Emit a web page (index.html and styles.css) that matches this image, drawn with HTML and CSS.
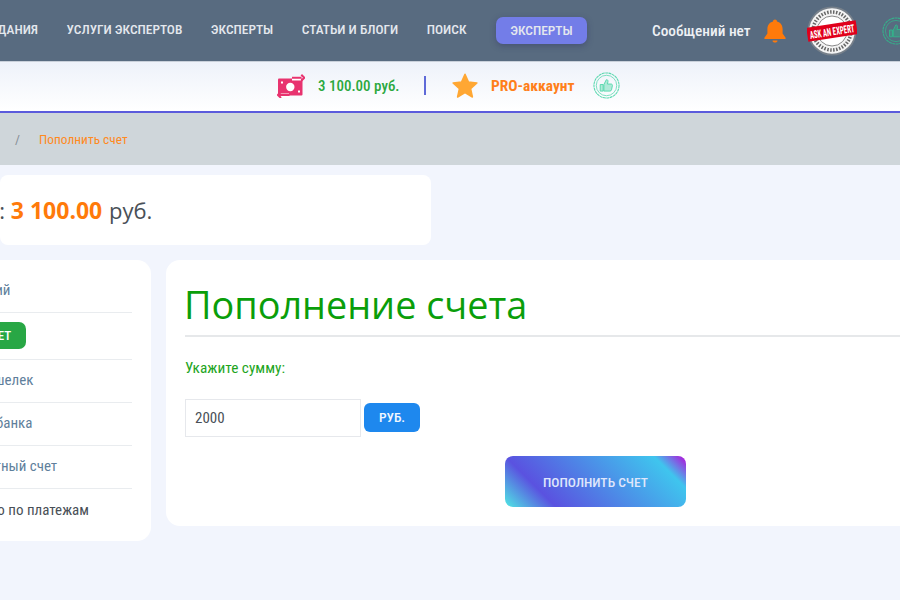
FILE: index.html
```html
<!DOCTYPE html>
<html lang="ru">
<head>
<meta charset="utf-8">
<title>Пополнение счета</title>
<link rel="stylesheet" href="styles.css">
</head>
<body>
<header class="topbar">
  <nav class="nav">
    <a class="nav-link">ЗАДАНИЯ</a>
    <a class="nav-link">УСЛУГИ ЭКСПЕРТОВ</a>
    <a class="nav-link">ЭКСПЕРТЫ</a>
    <a class="nav-link">СТАТЬИ И БЛОГИ</a>
    <a class="nav-link">ПОИСК</a>
    <a class="nav-btn">ЭКСПЕРТЫ</a>
  </nav>
  <div class="user">
    <span class="messages">Сообщений нет</span>
    <svg class="bell" viewBox="0 0 22 24"><path d="M11 .5c1.200 0 2 .8 2 2 3.600.8 5.600 3.800 5.600 7.600v4.400l3 4.200c.3.600 0 1.300-.8 1.300H1.200c-.8 0-1.100-.7-.8-1.300l3-4.200v-4.400c0-3.800 2-6.800 5.600-7.600 0-1.200.8-2 2-2z" fill="#ff7a0a"/><path d="M8.500 21.500h5c0 1.400-1.100 2-2.500 2s-2.500-.6-2.500-2z" fill="#ff7a0a"/></svg>
    <svg class="stamp" viewBox="0 0 50 50">
      <circle cx="25" cy="25" r="24.500" fill="#77808a"/>
      <circle cx="25" cy="25" r="22.800" fill="#f4f4f4"/>
      <circle cx="25" cy="25" r="15" fill="#fff" stroke="#888" stroke-width="1"/>
      <circle cx="25" cy="25" r="19" fill="none" stroke="#666" stroke-width="3.500" stroke-dasharray="1.500 1.500"/>
      <g transform="rotate(-9 25 25)">
        <rect x="0" y="18" width="50" height="14" fill="#e0001b"/>
        <text class="stamp-text" x="25" y="29.500" text-anchor="middle" textLength="45" lengthAdjust="spacingAndGlyphs">ASK AN EXPERT</text>
      </g>
    </svg>
    <svg class="seal seal-dark" viewBox="0 0 28 28"><use href="#seal"/></svg>
  </div>
</header>

<section class="subbar">
  <svg class="money" viewBox="0 0 28 24">
    <rect x="1" y="4.500" width="24.500" height="17" rx="1" fill="#e8336f"/>
    <circle cx="13.300" cy="13" r="4.200" fill="#fff"/>
    <rect x="4" y="7.500" width="2" height="2" fill="#fff"/><rect x="21" y="16.500" width="2" height="2" fill="#fff"/>
    <path d="M15 4.500h9" stroke="#fff" stroke-width="4"/>
    <path d="M15 3.800h9.500M24.300 .8l3 3-3 3" fill="none" stroke="#e8336f" stroke-width="2"/>
    <path d="M12 21.500h-9" stroke="#fff" stroke-width="4"/>
    <path d="M12.500 21H2.500M4 17.800L1 21l3 3" fill="none" stroke="#e8336f" stroke-width="2"/>
  </svg>
  <span class="sum">3 100.00 руб.</span>
  <span class="divider"></span>
  <svg class="star" viewBox="0 0 26 26"><path d="M13 1.200l3.500 7.900 8.400.8-6.300 5.700 1.800 8.400L13 19.700 5.600 24l1.800-8.400L1.100 9.900l8.400-.8z" fill="#ffa733" stroke="#ffa733" stroke-width="1.500" stroke-linejoin="round"/></svg>
  <span class="pro">PRO-аккаунт</span>
  <svg class="seal seal-light" viewBox="0 0 28 28">
    <defs>
      <g id="seal">
        <circle cx="14" cy="14" r="13" fill="none" stroke="currentColor" stroke-width="1.100" stroke-dasharray="3 .5"/>
        <circle cx="14" cy="14" r="10.600" fill="none" stroke="currentColor" stroke-width=".8"/>
        <path d="M7.500 13h3v6.800h-3zM11.300 13l2.500-5c1.300-.2 2 .8 1.700 2l-.5 2.500h3.800c1 0 1.500.8 1.300 1.700l-.9 4.300c-.2.800-.8 1.300-1.600 1.300h-6.300z" fill="currentColor" fill-opacity=".45" stroke="currentColor" stroke-width="1"/>
      </g>
    </defs>
    <use href="#seal"/>
  </svg>
</section>

<div class="crumbs">
  <span class="crumb-sep">/</span>
  <span class="crumb-now">Пополнить счет</span>
</div>

<main class="page">
  <div class="balance">Ваш баланс: <b class="balance-num">3 100.00</b> руб.</div>
  <div class="columns">
    <aside class="side">
      <ul class="side-list">
        <li class="side-item side-item-history">История операций</li>
        <li class="side-item side-item-btn"><span class="side-btn">ПОПОЛНИТЬ СЧЕТ</span></li>
        <li class="side-item side-item-wallet">Электронный кошелек</li>
        <li class="side-item side-item-bank">Реквизиты банка</li>
        <li class="side-item side-item-account">Расчетный счет</li>
        <li class="side-item side-item-dark">Инфо по платежам</li>
      </ul>
    </aside>
    <section class="card">
      <h1 class="title">Пополнение счета</h1>
      <label class="label">Укажите сумму:</label>
      <div class="amount-row">
        <input class="amount" value="2000">
        <button class="currency">РУБ.</button>
      </div>
      <div class="submit-row"><button class="submit">ПОПОЛНИТЬ СЧЕТ</button></div>
    </section>
  </div>
</main>
</body>
</html>
```
FILE: styles.css
```css
* { box-sizing: border-box; }
html, body { margin: 0; height: 600px; overflow: hidden; }
body { background: #f2f5fd; font-family: Roboto, "Liberation Sans", sans-serif; font-stretch: 75%; width: 900px; }

.topbar { height: 62px; background: #586b80; border-bottom: 1px solid #c9d0da; display: flex; align-items: center; overflow: hidden; white-space: nowrap; }
.nav { display: flex; align-items: center; gap: 28.500px; margin-left: -17.500px; flex: none; }
.nav-link { color: #e4e8ee; font-size: 13.400px; font-weight: 500; padding-bottom: 3px; }
.nav-btn { width: 91px; height: 27px; margin-left: 1px; background: #737de8; border-radius: 7px; color: #e4e8ee; font-size: 13.400px; font-weight: 500; display: flex; align-items: center; justify-content: center; box-shadow: 0 2px 6px rgba(40,40,90,.35); }
.user { display: flex; align-items: center; margin-left: 65px; flex: none; }
.messages { color: #eef1f5; font-size: 15.300px; font-weight: 500; margin-right: 13px; }
.bell { width: 22px; height: 24px; margin-right: 21px; }
.stamp { width: 50px; height: 50px; margin-right: 25px; }
.stamp-text { font: 700 11px Roboto, sans-serif; font-stretch: 75%; fill: #fff; }
.seal { width: 28px; height: 28px; flex: none; }
.seal-dark { color: #35b08a; }
.seal-light { color: #58d8ae; width: 27px; height: 27px; }

.subbar { height: 51px; background: linear-gradient(#eef2fa, #fff); border-bottom: 2px solid #5b5bdc; display: flex; align-items: center; padding-left: 277px; padding-bottom: 2px; }
.money { width: 28px; height: 24px; margin-right: 13px; }
.sum { color: #2aa83e; font-size: 15px; font-weight: 500; width: 81px; white-space: nowrap; }
.divider { width: 2px; height: 19px; background: #5f6ad8; margin-left: 25px; margin-right: 26px; }
.star { width: 26px; height: 26px; margin-right: 13px; }
.pro { color: #ff7f1a; font-size: 15.400px; font-weight: 700; margin-right: 18px; }

.crumbs { height: 52px; background: #cfd6da; display: flex; align-items: center; padding-left: 15px; font-size: 13.400px; }
.crumb-sep { color: #868e96; width: 24px; }
.crumb-now { color: #ff8a1f; }

.page { padding-top: 10px; }
.balance { width: 431px; height: 70px; background: #fff; border-radius: 8px; line-height: 70px; text-indent: -127px; font-family: "Open Sans", sans-serif; font-stretch: 100%; font-size: 22px; color: #495057; white-space: nowrap; overflow: hidden; }
.balance-num { color: #ff7a0a; font-weight: 700; font-size: 23px; margin-right: 1px; }

.columns { display: flex; align-items: flex-start; gap: 15px; margin-top: 15px; }
.side { width: 151px; height: 281px; background: #fff; border-radius: 0 14px 14px 0; padding: 9px 19px 0 0; overflow: hidden; flex: none; }
.side-list { list-style: none; margin: 0 0 0 -120px; padding: 0; }
.side-item { height: 43px; padding-bottom: 3px; display: flex; align-items: center; color: #5f7f9c; font-size: 15px; border-bottom: 1px solid #e9ecef; white-space: nowrap; }
.side-item-history { padding-left: 15px; height: 44px; padding-bottom: 1px; }
.side-item-btn { height: 47px; padding-left: 20px; padding-bottom: 2px; }
.side-item-wallet { padding-left: 11px; }
.side-item-bank { padding-left: 44px; }
.side-item-account { padding-left: 78px; }
.side-btn { background: #28a745; color: #fff; font-size: 13px; font-weight: 500; height: 27px; border-radius: 7px; padding: 0 15px 0 10px; display: flex; align-items: center; }
.side-item-dark { color: #495057; border-bottom: 0; padding-left: 91px; padding-bottom: 2px; }

.card { flex: 1; height: 266px; margin-right: -40px; background: #fff; border-radius: 14px; padding: 19px 19px; }
.title { margin: 0; font-family: "Open Sans", sans-serif; font-stretch: 100%; font-weight: 400; font-size: 37.800px; line-height: 52px; text-indent: -1px; color: #0a9e0a; border-bottom: 2px solid #e6e8ea; height: 58px; }
.label { display: block; margin-top: 21px; font-size: 15.300px; color: #1ea51e; line-height: 20px; }
.amount-row { display: flex; align-items: center; gap: 3px; margin-top: 21px; }
.amount { width: 176px; height: 38px; border: 1px solid #e6e8ec; padding: 0 9px; font: 15px Roboto, sans-serif; font-stretch: 75%; color: #495057; outline: 0; }
.currency { width: 56px; height: 29px; border: 0; background: #1e88ee; color: #f2f7ff; border-radius: 6px; font: 500 13.500px Roboto, sans-serif; font-stretch: 75%; margin-top: -2px; }
.submit-row { margin-top: 19px; padding-left: 320px; }
.submit { width: 181px; height: 51px; border: 0; border-radius: 8px; color: #dfe6fb; font: 500 13.500px Roboto, sans-serif; font-stretch: 75%; background: linear-gradient(225deg, #a526dc 0, #a526dc 2%, #3fc5ee 14%, #5a52e0 78%, #4fe8e4 100%); }
```
